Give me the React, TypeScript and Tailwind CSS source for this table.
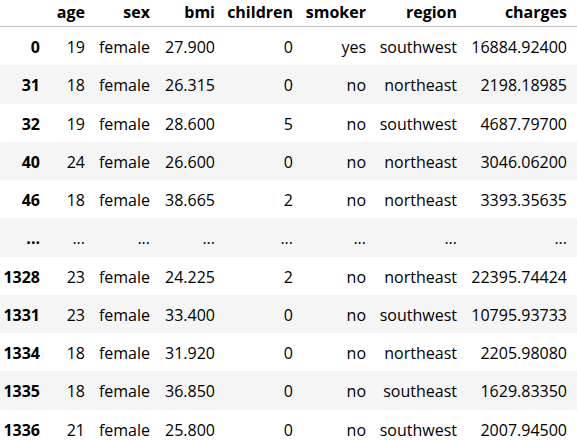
import React from "react";

const cols = ["", "age", "sex", "bmi", "children", "smoker", "region", "charges"];
const rows: string[][] = [
  ["0", "19", "female", "27.900", "0", "yes", "southwest", "16884.92400"],
  ["31", "18", "female", "26.315", "0", "no", "northeast", "2198.18985"],
  ["32", "19", "female", "28.600", "5", "no", "southwest", "4687.79700"],
  ["40", "24", "female", "26.600", "0", "no", "northeast", "3046.06200"],
  ["46", "18", "female", "38.665", "2", "no", "northeast", "3393.35635"],
  ["...", "...", "...", "...", "...", "...", "...", "..."],
  ["1328", "23", "female", "24.225", "2", "no", "northeast", "22395.74424"],
  ["1331", "23", "female", "33.400", "0", "no", "southwest", "10795.93733"],
  ["1334", "18", "female", "31.920", "0", "no", "northeast", "2205.98080"],
  ["1335", "18", "female", "36.850", "0", "no", "southeast", "1629.83350"],
  ["1336", "21", "female", "25.800", "0", "no", "southwest", "2007.94500"],
];

const grid = "grid grid-cols-[50px_45px_65px_65px_78px_73px_91px_110px]";

export default function App() {
  return (
    <div
      className="w-[577px] h-[440px] overflow-hidden bg-white text-black text-[16px]"
      style={{ fontFamily: '"Open Sans", "Noto Sans", sans-serif' }}
    >
      <div className={`${grid} h-[27px] items-center border-b border-[#bdbdbd] font-bold`}>
        {cols.map((c, i) => (
          <div key={i} className="text-right pr-[10px] leading-none pb-[3px]">
            {c}
          </div>
        ))}
      </div>
      {rows.map((r, ri) => (
        <div
          key={ri}
          className={`${grid} h-[38.25px] items-center ${ri % 2 === 1 ? "bg-[#f5f5f5]" : "bg-white"}`}
        >
          {r.map((v, ci) => (
            <div
              key={ci}
              className={`text-right pr-[10px] leading-none pt-[2px] ${ci === 0 ? "font-bold" : ""}`}
            >
              {v}
            </div>
          ))}
        </div>
      ))}
    </div>
  );
}
